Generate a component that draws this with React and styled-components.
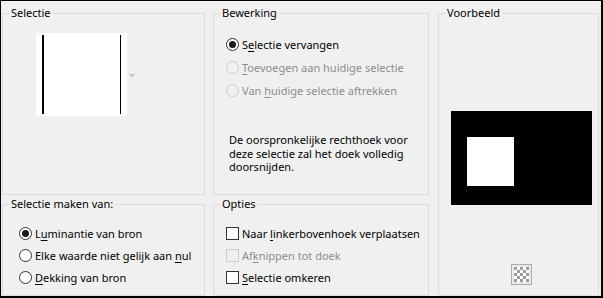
import React from 'react';
import styled, { createGlobalStyle } from 'styled-components';

const GlobalStyle = createGlobalStyle`
  body {
    margin: 0;
    background: #ffffff;
    font-family: "Segoe UI", "Noto Sans", "Open Sans", sans-serif;
  }
`;

const Dialog = styled.div`
  box-sizing: border-box;
  width: 603px;
  height: 298px;
  background: #f0f0f0;
  border-style: solid;
  border-color: #000;
  border-width: 1px 2px 2px 1px;
  padding: 4px 0 0 1px;
  display: grid;
  grid-template-columns: 203px 216px 162px;
  grid-template-rows: 190px 100px;
  column-gap: 8px;
  row-gap: 1px;
  font-size: 11px;
  color: #000;
`;

const Group = styled.fieldset`
  margin: 0;
  padding: 0;
  min-width: 0;
  border: 1px solid #dcdcdc;
  display: flex;
  flex-direction: column;
  grid-column: ${p => p.$col};
  grid-row: ${p => p.$row};
  margin-left: ${p => p.$shift || 0}px;
`;

const Legend = styled.legend`
  margin-left: 6px;
  padding: 0 2px;
  font-size: 11px;
  line-height: 16px;
`;

const SelectieBody = styled.div`
  display: flex;
  align-items: center;
  padding: 12px 0 0 33px;
`;

const Thumb = styled.div`
  box-sizing: border-box;
  width: 91px;
  height: 83px;
  background: #fff;
  padding: 2px 6px;
  display: flex;
  justify-content: space-between;
`;

const Bar = styled.div`
  width: ${p => p.$w}px;
  background: #000;
`;

const Arrow = styled.svg`
  margin-left: 2px;
  margin-top: 2px;
`;

const OptionList = styled.div`
  display: flex;
  flex-direction: column;
  padding: ${p => p.$pad};
`;

const Row = styled.label`
  display: flex;
  align-items: center;
  height: ${p => p.$h || 22}px;
  gap: 3px;
  color: ${p => (p.$disabled ? '#8d8d8d' : '#000')};
  white-space: nowrap;
  u {
    text-decoration: underline;
    text-underline-offset: 2px;
  }
`;

const Radio = styled.span`
  box-sizing: border-box;
  width: 13px;
  height: 13px;
  border-radius: 50%;
  border: 1px solid ${p => (p.$disabled ? '#cccccc' : '#333')};
  background: ${p => (p.$disabled ? 'transparent' : '#fff')};
  display: flex;
  align-items: center;
  justify-content: center;
  flex: none;
  &::after {
    content: '';
    width: 7px;
    height: 7px;
    border-radius: 50%;
    background: #1a1a1a;
    display: ${p => (p.$checked ? 'block' : 'none')};
  }
`;

const Check = styled.span`
  box-sizing: border-box;
  width: 13px;
  height: 13px;
  border: 1px solid ${p => (p.$disabled ? '#cccccc' : '#333')};
  background: ${p => (p.$disabled ? 'transparent' : '#fff')};
  flex: none;
`;

const Note = styled.div`
  display: flex;
  flex-direction: column;
  margin: 31px 0 0 15px;
`;

const NoteLine = styled.span`
  display: block;
  height: 13.5px;
  line-height: 13.5px;
  white-space: nowrap;
`;

const PreviewBody = styled.div`
  display: flex;
  flex-direction: column;
  align-items: center;
  padding: 90px 0 0 5px;
`;

const Canvas = styled.div`
  width: 141px;
  height: 94px;
  background: #000;
  box-sizing: border-box;
  padding: 26px 0 0 16px;
`;

const Selection = styled.div`
  width: 47px;
  height: 49px;
  background: #fff;
`;

const ToolButton = styled.button`
  box-sizing: border-box;
  width: 21px;
  height: 21px;
  margin-top: 59px;
  padding: 0;
  border: 1px solid #adadad;
  background: #e9e9e9;
  display: flex;
  align-items: center;
  justify-content: center;
`;

const Checker = () => (
  <svg width="15" height="15" viewBox="0 0 15 15">
    <rect width="15" height="15" fill="#fff" />
    {[0, 1, 2, 3, 4].flatMap(r =>
      [0, 1, 2, 3, 4]
        .filter(c => (r + c) % 2 === 0)
        .map(c => <rect key={`${r}-${c}`} x={c * 3} y={r * 3} width="3" height="3" fill="#9c9c9c" />)
    )}
  </svg>
);

export default function App() {
  return (
    <>
      <GlobalStyle />
      <Dialog>
        <Group $col="1" $row="1">
          <Legend>Selectie</Legend>
          <SelectieBody>
            <Thumb>
              <Bar $w={2} />
              <Bar $w={1} />
            </Thumb>
            <Arrow width="6" height="4" viewBox="0 0 6 4">
              <rect x="0" y="0" width="6" height="1" fill="#c4c4c4" />
              <path d="M1 1 H5 L3 4 Z" fill="#c4c4c4" />
            </Arrow>
          </SelectieBody>
        </Group>

        <Group $col="2" $row="1">
          <Legend>Bewerking</Legend>
          <OptionList $pad="12px 0 0 12px">
            <Row $h={23}><Radio $checked /> <span>S<u>e</u>lectie vervangen</span></Row>
            <Row $h={23} $disabled><Radio $disabled /> <span><u>T</u>oevoegen aan huidige selectie</span></Row>
            <Row $h={23} $disabled><Radio $disabled /> <span>Van <u>h</u>uidige selectie aftrekken</span></Row>
          </OptionList>
          <Note>
            <NoteLine>De oorspronkelijke rechthoek voor</NoteLine>
            <NoteLine>deze selectie zal het doek volledig</NoteLine>
            <NoteLine>doorsnijden.</NoteLine>
          </Note>
        </Group>

        <Group $col="3" $row="1 / span 2" $shift={1}>
          <Legend>Voorbeeld</Legend>
          <PreviewBody>
            <Canvas>
              <Selection />
            </Canvas>
            <ToolButton aria-label="Transparantie">
              <Checker />
            </ToolButton>
          </PreviewBody>
        </Group>

        <Group $col="1" $row="2">
          <Legend>Selectie maken van:</Legend>
          <OptionList $pad="10px 0 0 16px">
            <Row><Radio $checked /> <span>L<u>u</u>minantie van bron</span></Row>
            <Row><Radio /> <span>Elke waarde niet gelijk aan <u>n</u>ul</span></Row>
            <Row><Radio /> <span><u>D</u>ekking van bron</span></Row>
          </OptionList>
        </Group>

        <Group $col="2" $row="2">
          <Legend>Opties</Legend>
          <OptionList $pad="10px 0 0 12px">
            <Row><Check /> <span>Naar <u>l</u>inkerbovenhoek verplaatsen</span></Row>
            <Row $disabled><Check $disabled /> <span>Af<u>k</u>nippen tot doek</span></Row>
            <Row><Check /> <span><u>S</u>electie omkeren</span></Row>
          </OptionList>
        </Group>
      </Dialog>
    </>
  );
}
